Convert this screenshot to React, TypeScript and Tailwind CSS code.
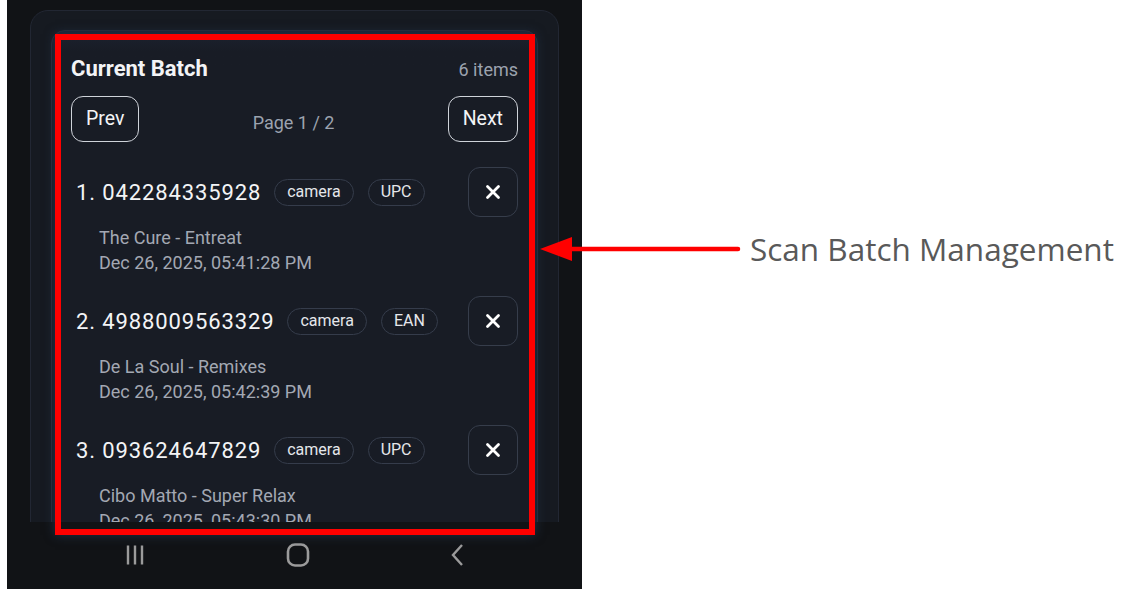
import React, { FC } from "react"

interface ScanItem {
  code: string
  source: string
  type: string
  title: string
  time: string
}

const items: ScanItem[] = [
  { code: "042284335928", source: "camera", type: "UPC", title: "The Cure - Entreat", time: "Dec 26, 2025, 05:41:28 PM" },
  { code: "4988009563329", source: "camera", type: "EAN", title: "De La Soul - Remixes", time: "Dec 26, 2025, 05:42:39 PM" },
  { code: "093624647829", source: "camera", type: "UPC", title: "Cibo Matto - Super Relax", time: "Dec 26, 2025, 05:43:30 PM" },
]

const Pill: FC<{ label: string }> = ({ label }) => (
  <span className="h-[27px] px-[12px] rounded-full border border-[#353c4b] text-[16px] leading-none text-[#e5e7eb] flex items-center">
    {label}
  </span>
)

const XIcon = () => (
  <svg width="16" height="16" viewBox="0 0 16 16" fill="none">
    <path d="M2.5 2.5 L13.5 13.5 M13.5 2.5 L2.5 13.5" stroke="#fff" strokeWidth="2.8" strokeLinecap="round" />
  </svg>
)

const BatchItem: FC<{ index: number; item: ScanItem }> = ({ index, item }) => (
  <div className="pl-[5px]">
    <div className="flex items-center h-[50px]">
      <span className="text-[22px] tracking-[0.04em] text-[#f3f4f6]">
        {index}. {item.code}
      </span>
      <div className="ml-[13px] flex gap-[14px]">
        <Pill label={item.source} />
        <Pill label={item.type} />
      </div>
      <button className="ml-auto w-[50px] h-[50px] rounded-[12px] border border-[#363d4b] flex items-center justify-center">
        <XIcon />
      </button>
    </div>
    <div className="mt-[8px] pl-[23px] text-[18px] leading-[25px] text-[#a3a8b3]">
      <div>{item.title}</div>
      <div>{item.time}</div>
    </div>
  </div>
)

const NavBar = () => (
  <div className="h-[67px] shrink-0 bg-[#111316] flex items-center justify-center gap-[140px] pb-[2px]">
    <svg width="22" height="22" viewBox="0 0 22 22">
      <path d="M4 1.5v19 M11 1.5v19 M18 1.5v19" stroke="#9b9b9b" strokeWidth="2.4" />
    </svg>
    <svg width="24" height="24" viewBox="0 0 24 24" fill="none">
      <rect x="2" y="1.5" width="20" height="21" rx="7" stroke="#9b9b9b" strokeWidth="2.6" />
    </svg>
    <svg width="16" height="24" viewBox="0 0 16 24" fill="none">
      <path d="M12 2 L3 12 L12 22" stroke="#9b9b9b" strokeWidth="2.4" />
    </svg>
  </div>
)

const App: FC = () => {
  return (
    <div className="relative w-[1126px] h-[601px] bg-white overflow-hidden font-['Roboto',sans-serif]">
      <div className="ml-[7px] w-[575px] h-[589px] bg-[#111316] flex flex-col">
        <div className="flex-1 overflow-hidden pt-[10px] px-[23px]">
          <div className="h-[560px] rounded-[18px] border border-[#222733] bg-[#161a21] px-[20px] pt-[19px]">
            <div className="h-[540px] rounded-[14px] border border-[#282d39] bg-gradient-to-b from-[#1c2230] via-[#181c25] to-[#181c25] bg-[length:100%_40px] bg-no-repeat bg-[#181c25] px-[19px] pt-[24px]">
              <div className="flex items-baseline justify-between">
                <span className="text-[22px] leading-[28px] font-bold text-[#f3f4f6]">Current Batch</span>
                <span className="text-[18px] text-[#9ca3af]">6 items</span>
              </div>
              <div className="mt-[13px] flex items-center justify-between">
                <button className="h-[46px] px-[14px] rounded-[12px] border border-[#cfd3da] text-[19.5px] text-[#f3f4f6]">
                  Prev
                </button>
                <span className="mt-[7px] text-[18px] text-[#9ca3af]">Page 1 / 2</span>
                <button className="h-[46px] px-[14px] rounded-[12px] border border-[#cfd3da] text-[19.5px] text-[#f3f4f6]">
                  Next
                </button>
              </div>
              <div className="mt-[25px] flex flex-col gap-[21px]">
                {items.map((it, i) => (
                  <BatchItem key={it.code} index={i + 1} item={it} />
                ))}
              </div>
            </div>
          </div>
        </div>
        <NavBar />
      </div>

      {/* annotation overlay */}
      <div className="absolute left-[55px] top-[34px] w-[480px] h-[501px] border-[6px] border-[#ff0000] shadow-[0_0_10px_rgba(40,60,90,0.7)]" />
      <div className="absolute left-[538px] top-[231px] flex items-center">
        <svg width="204" height="36" viewBox="0 0 204 36">
          <path d="M2 18 L34 6 L34 30 Z" fill="#ff0000" />
          <path d="M30 18 H200" stroke="#ff0000" strokeWidth="4.5" strokeLinecap="round" />
        </svg>
        <span className="ml-[8px] font-['Open_Sans',sans-serif] text-[31.5px] text-[#595959] leading-none">
          Scan Batch Management
        </span>
      </div>
    </div>
  )
}

export default App
